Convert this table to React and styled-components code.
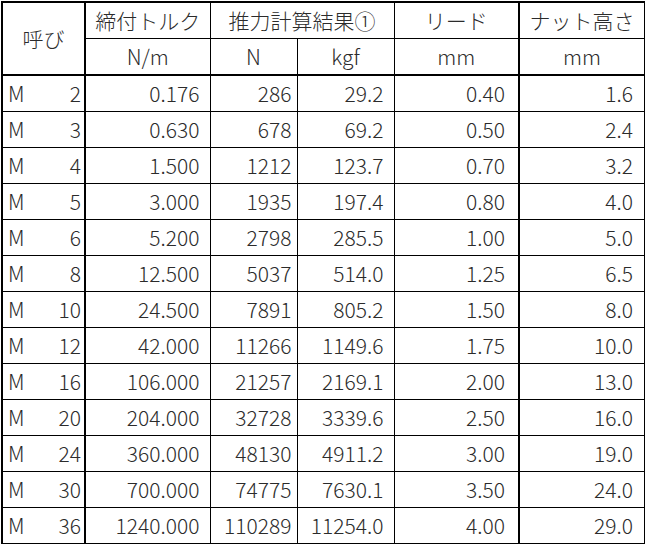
import React from 'react';
import styled, { createGlobalStyle } from 'styled-components';

const GlobalStyle = createGlobalStyle`
  html, body {
    margin: 0;
    padding: 0;
    background: #fff;
  }
  body {
    font-family: "Noto Sans CJK JP", "Noto Sans", sans-serif;
  }
`;

const Sheet = styled.table`
  border-collapse: collapse;
  table-layout: fixed;
  width: 644px;
  margin: 1px 0 0 1px;
  border: 2px solid #000;
  color: #2b2b2b;
  font-size: 21px;
  font-weight: 300;
`;

const HeadCell = styled.th`
  font-weight: 300;
  height: 35px;
  padding: 0;
  text-align: center;
  border: 1px solid #000;
  border-right-width: ${p => (p.$thick ? '2px' : '1px')};
  border-bottom-width: ${p => (p.$lastRow ? '2px' : '1px')};
  line-height: 1;
`;

const Cell = styled.td`
  height: 35px;
  padding: 0 ${p => p.$pad || 4}px 0 4px;
  text-align: right;
  border: 1px solid #000;
  border-right-width: ${p => (p.$thick ? '2px' : '1px')};
  line-height: 1;
  white-space: nowrap;
`;

const SizeWrap = styled.div`
  display: flex;
  justify-content: space-between;
  align-items: center;
  padding-left: 1px;
`;

const rows = [
  ['2', '0.176', '286', '29.2', '0.40', '1.6'],
  ['3', '0.630', '678', '69.2', '0.50', '2.4'],
  ['4', '1.500', '1212', '123.7', '0.70', '3.2'],
  ['5', '3.000', '1935', '197.4', '0.80', '4.0'],
  ['6', '5.200', '2798', '285.5', '1.00', '5.0'],
  ['8', '12.500', '5037', '514.0', '1.25', '6.5'],
  ['10', '24.500', '7891', '805.2', '1.50', '8.0'],
  ['12', '42.000', '11266', '1149.6', '1.75', '10.0'],
  ['16', '106.000', '21257', '2169.1', '2.00', '13.0'],
  ['20', '204.000', '32728', '3339.6', '2.50', '16.0'],
  ['24', '360.000', '48130', '4911.2', '3.00', '19.0'],
  ['30', '700.000', '74775', '7630.1', '3.50', '24.0'],
  ['36', '1240.000', '110289', '11254.0', '4.00', '29.0'],
];

export default function App() {
  return (
    <>
      <GlobalStyle />
      <Sheet>
        <colgroup>
          <col style={{ width: 83 }} />
          <col style={{ width: 125 }} />
          <col style={{ width: 87 }} />
          <col style={{ width: 97 }} />
          <col style={{ width: 125 }} />
          <col style={{ width: 126 }} />
        </colgroup>
        <thead>
          <tr>
            <HeadCell rowSpan={2} $thick $lastRow>呼び</HeadCell>
            <HeadCell>締付トルク</HeadCell>
            <HeadCell colSpan={2}>推力計算結果①</HeadCell>
            <HeadCell $thick>リード</HeadCell>
            <HeadCell>ナット高さ</HeadCell>
          </tr>
          <tr>
            <HeadCell $lastRow>N/m</HeadCell>
            <HeadCell $lastRow>N</HeadCell>
            <HeadCell $lastRow>kgf</HeadCell>
            <HeadCell $lastRow $thick>mm</HeadCell>
            <HeadCell $lastRow>mm</HeadCell>
          </tr>
        </thead>
        <tbody>
          {rows.map(r => (
            <tr key={r[0]}>
              <Cell $thick $pad={3}>
                <SizeWrap>
                  <span>M</span>
                  <span>{r[0]}</span>
                </SizeWrap>
              </Cell>
              <Cell $pad={10}>{r[1]}</Cell>
              <Cell $pad={5}>{r[2]}</Cell>
              <Cell $pad={10}>{r[3]}</Cell>
              <Cell $pad={13} $thick>{r[4]}</Cell>
              <Cell $pad={11}>{r[5]}</Cell>
            </tr>
          ))}
        </tbody>
      </Sheet>
    </>
  );
}
